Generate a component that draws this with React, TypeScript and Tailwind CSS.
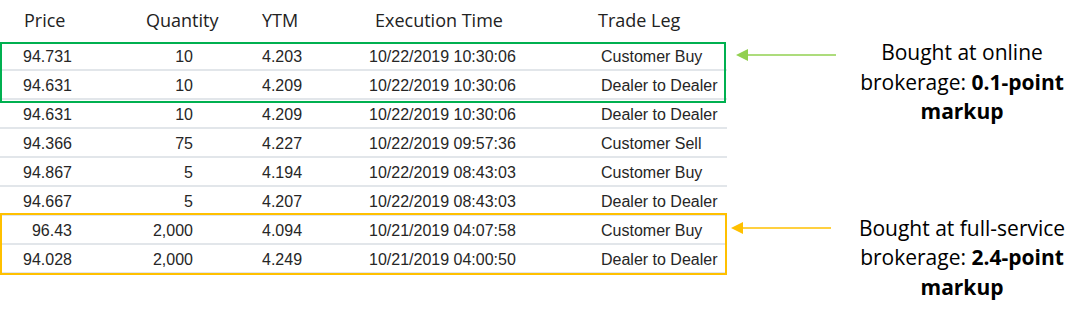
const rows = [
  ["94.731", "10", "4.203", "10/22/2019 10:30:06", "Customer Buy"],
  ["94.631", "10", "4.209", "10/22/2019 10:30:06", "Dealer to Dealer"],
  ["94.631", "10", "4.209", "10/22/2019 10:30:06", "Dealer to Dealer"],
  ["94.366", "75", "4.227", "10/22/2019 09:57:36", "Customer Sell"],
  ["94.867", "5", "4.194", "10/22/2019 08:43:03", "Customer Buy"],
  ["94.667", "5", "4.207", "10/22/2019 08:43:03", "Dealer to Dealer"],
  ["96.43", "2,000", "4.094", "10/21/2019 04:07:58", "Customer Buy"],
  ["94.028", "2,000", "4.249", "10/21/2019 04:00:50", "Dealer to Dealer"],
];

const Arrow = ({ color, tip, end, y }: { color: string; tip: number; end: number; y: number }) => (
  <svg width="115" height="30" className="shrink-0">
    <line x1={tip + 10} y1={y} x2={end} y2={y} stroke={color} strokeWidth="1.5" />
    <polygon points={`${tip},${y} ${tip + 12},${y - 6} ${tip + 12},${y + 6}`} fill={color} />
  </svg>
);

const Note = ({ lead, bold, rest }: { lead: string; bold: string; rest: string }) => (
  <p className="w-[240px] text-center text-[21px] leading-[29.5px] text-black font-['Open_Sans',sans-serif]">
    {lead}
    <br />
    brokerage: <b>{bold}</b>
    <br />
    <b>{rest}</b>
  </p>
);

export default function App() {
  return (
    <div className="flex h-[317px] w-[1091px] bg-white">
      <div className="relative w-[727px]">
        <div className="flex h-[42px] items-center pb-[2px] text-[18px] text-[#222] font-['Open_Sans',sans-serif]">
          <div className="w-[72px] pl-[24px]">Price</div>
          <div className="w-[121px] pl-[74px]">Quantity</div>
          <div className="w-[176px] pl-[69px]">YTM</div>
          <div className="w-[229px] pl-[6px]">Execution Time</div>
          <div>Trade Leg</div>
        </div>
        {rows.map((r, i) => (
          <div
            key={i}
            className="flex h-[29px] items-center border-b-2 border-[#e2e6ea] pt-[3px] text-[16px] text-[#262626] font-['Liberation_Sans',Arial,sans-serif]"
          >
            <div className="w-[72px] text-right">{r[0]}</div>
            <div className="w-[121px] text-right">{r[1]}</div>
            <div className="w-[176px] pl-[69px]">{r[2]}</div>
            <div className="w-[229px]">{r[3]}</div>
            <div className="pl-[3px]">{r[4]}</div>
          </div>
        ))}
        <div className="absolute left-0 top-[42px] h-[61px] w-[726px] border-2 border-[#00b050]" />
        <div className="absolute left-0 top-[213px] h-[62px] w-[727px] border-2 border-[#ffc000]" />
      </div>
      <div className="flex flex-col">
        <div className="mt-[38px] flex items-start">
          <Arrow color="#92d050" tip={9} end={109} y={17} />
          <Note lead="Bought at online" bold="0.1-point" rest="markup" />
        </div>
        <div className="mt-[87px] flex items-start">
          <Arrow color="#ffc000" tip={4} end={104} y={14} />
          <Note lead="Bought at full-service" bold="2.4-point" rest="markup" />
        </div>
      </div>
    </div>
  );
}
